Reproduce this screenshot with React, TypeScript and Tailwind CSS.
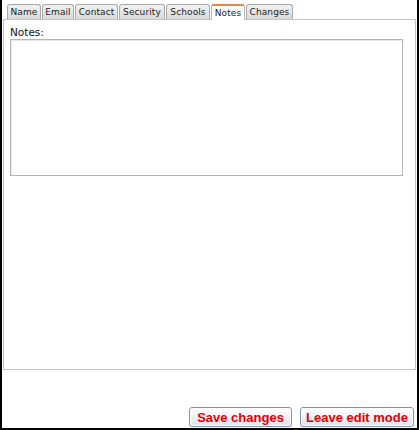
import { useState } from "react";

const tabs = [
  { label: "Name", w: "w-[34px]" },
  { label: "Email", w: "w-[32px]" },
  { label: "Contact", w: "w-[43px]" },
  { label: "Security", w: "w-[46px]" },
  { label: "Schools", w: "w-[44px]" },
  { label: "Notes", w: "w-[34px]" },
  { label: "Changes", w: "w-[47px]" },
];

const btn =
  "h-[20px] rounded-[3px] border border-[#7f93b5] bg-gradient-to-b from-white to-[#dfe4ee] font-['Liberation_Sans',Arial,sans-serif] text-[13px] leading-none font-bold text-[#e40000] shadow-[inset_0_0_0_1px_#ffffff]";

export default function App() {
  const [active, setActive] = useState("Notes");
  const [notes, setNotes] = useState("");

  return (
    <div className="flex h-[430px] w-[419px] flex-col border-r-2 border-b-2 border-l-2 border-black bg-white font-['DejaVu_Sans',Verdana,sans-serif]">
      {/* tab strip */}
      <div className="ml-[3px] mt-[4px] flex h-[15px] items-end pl-[2px]">
        {tabs.map((t) => {
          const on = t.label === active;
          return (
            <button
              key={t.label}
              onClick={() => setActive(t.label)}
              className={`${t.w} mr-[1px] flex h-[15px] items-center justify-center rounded-t-[3px] border border-b-0 text-[9px] leading-none tracking-[0.1px] text-[#222] ${
                on
                  ? "relative z-10 -mb-[1px] h-[16px] border-[#b8b8b8] border-t-2 border-t-[#e0874a] bg-white"
                  : "border-[#aaaaaa] bg-gradient-to-b from-[#f2f2f2] to-[#d9d9d9]"
              }`}
            >
              {t.label}
            </button>
          );
        })}
      </div>

      {/* tab panel */}
      <div className="ml-[1px] mr-[1px] flex h-[351px] flex-col border border-[#c4c4c4] bg-white px-[6px] pt-[6px]">
        <label className="text-[10.5px] leading-[12px] text-[#111]">Notes:</label>
        <textarea
          value={notes}
          onChange={(e) => setNotes(e.target.value)}
          className="mt-[1px] h-[137px] w-[393px] resize-none border border-[#b5b5b5] bg-white outline-none shadow-[inset_1px_1px_0_#e6e6e6]"
        />
      </div>

      {/* actions */}
      <div className="mt-auto mb-[1px] flex justify-end gap-[8px] pr-[3px]">
        <button className={`${btn} w-[103px]`}>Save changes</button>
        <button className={`${btn} w-[114px]`}>Leave edit mode</button>
      </div>
    </div>
  );
}
